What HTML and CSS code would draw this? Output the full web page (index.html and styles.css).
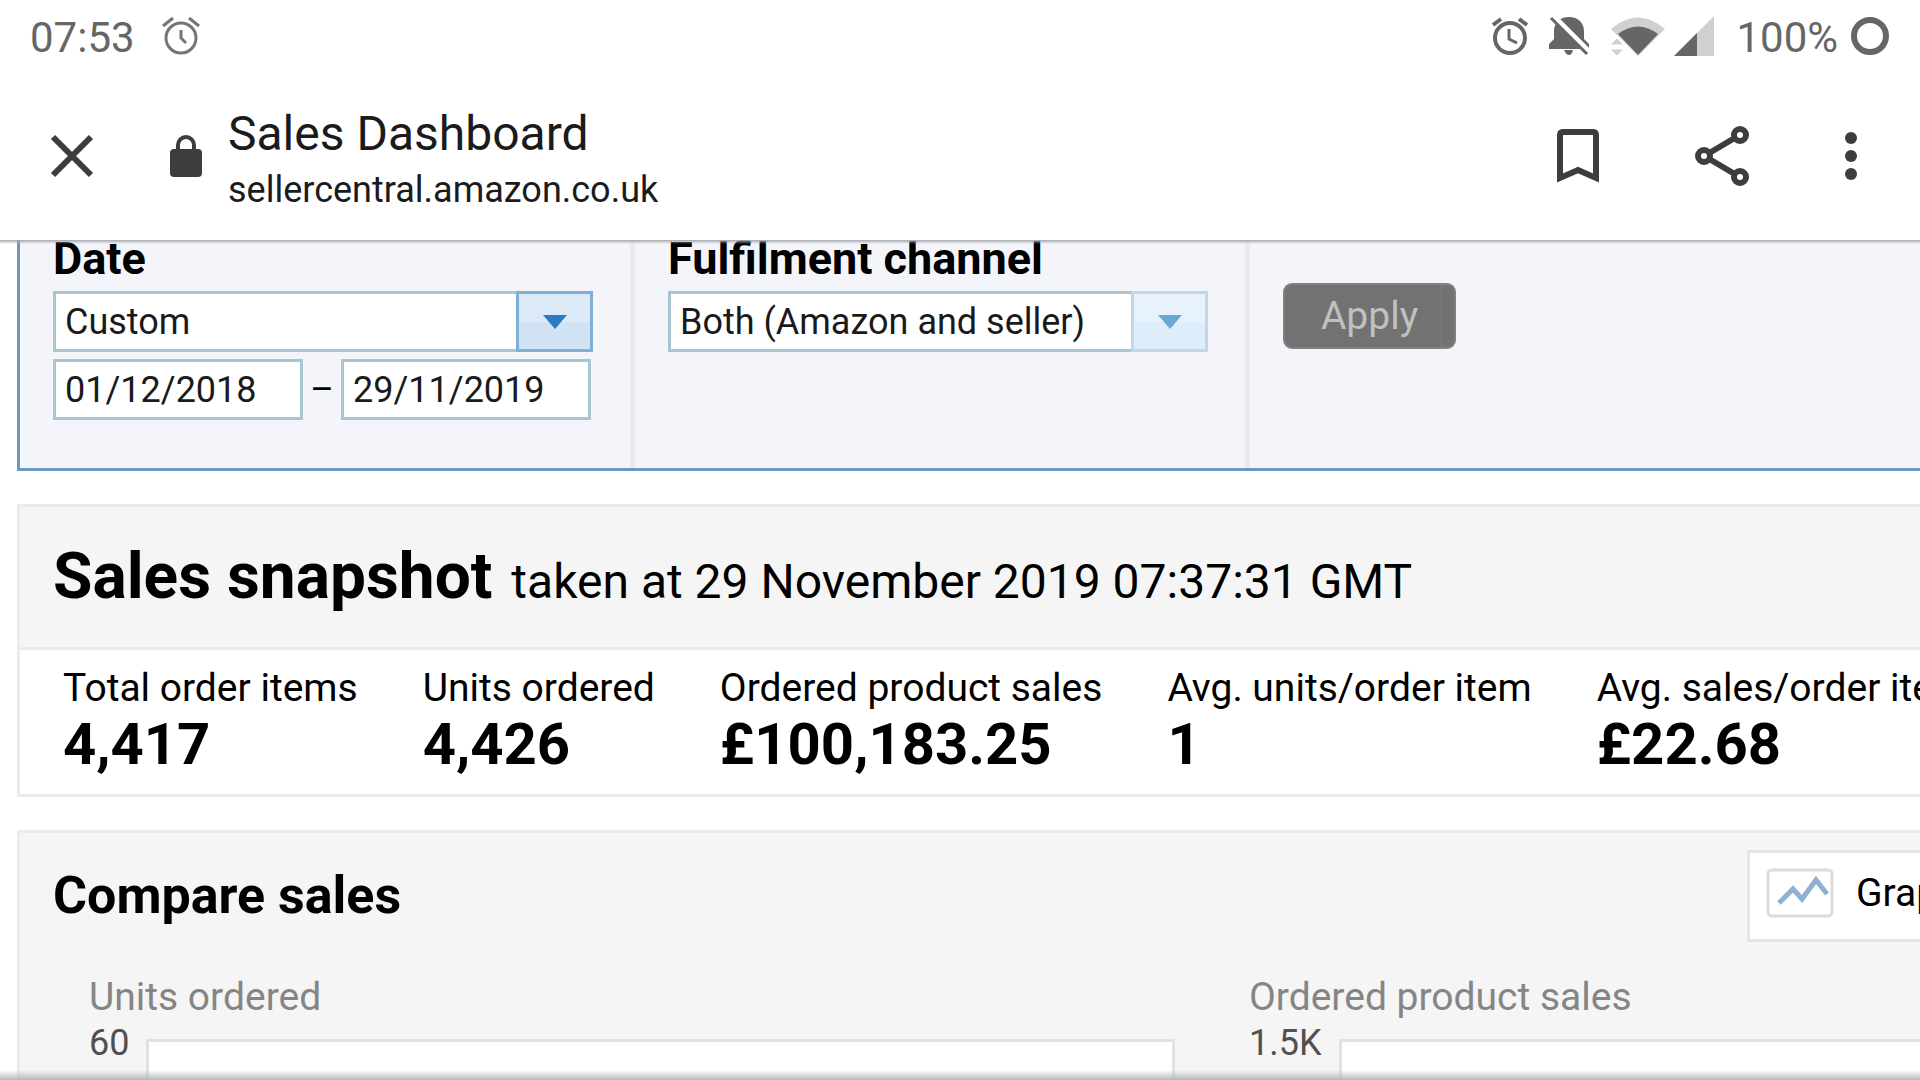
FILE: index.html
```html
<!doctype html>
<html lang="en-GB">
    <head>
        <meta charset="utf-8">
        <meta name="viewport" content="width=device-width, initial-scale=1">
        <title>Sales Dashboard</title>
        <link rel="stylesheet" href="styles.css">
    </head>
    <body>
        <!-- phone status bar -->
        <div class="status">
            <span>07:53</span>
            <svg class="status-alarm" width="38" height="40" viewBox="0 0 38 40" fill="none" stroke="#757575" stroke-width="3">
                <circle cx="19" cy="22" r="15"/>
                <path d="M19 14v8l5 5M1 10l10-8M37 10L27 2"/>
            </svg>
            <div class="status-right">
                <svg width="36" height="40" viewBox="0 0 36 40" fill="none" stroke="#666" stroke-width="4">
                    <circle cx="18" cy="22" r="15"/>
                    <path d="M17 13v10l8 4" stroke-width="3"/>
                    <path d="M1 9l8-6M35 9l-8-6"/>
                </svg>
                <svg class="bell" width="40" height="40" viewBox="0 0 40 40">
                    <path d="M0 33v-5l5-5v-8C5 7 11 1 20 1s15 6 15 14v8l5 5v5zM15 34h9q-1 5-4 5t-5-5z" fill="#666"/>
                    <path d="M4 0l36 36" stroke="#fff" stroke-width="6"/>
                    <path d="M2 2l36 36" stroke="#666" stroke-width="3"/>
                </svg>
                <svg class="wifi" width="54" height="40" viewBox="0 0 54 40">
                    <path d="M0 13Q27-10 54 13L27 40z" fill="#d0d0d0"/>
                    <path d="M7 18Q27 3 47 18L27 39z" fill="#666"/>
                    <path d="M-1 29h14l-7-7zM-1 33h14l-7 7z" fill="#d0d0d0" stroke="#fff" stroke-width="1"/>
                </svg>
                <svg class="signal" width="40" height="40" viewBox="0 0 40 40">
                    <path d="M40 0v40H0z" fill="#d0d0d0"/>
                    <path d="M23 17v23H0z" fill="#666"/>
                </svg>
                <span>100%</span>
                <svg width="40" height="40" viewBox="0 0 40 40"><circle cx="20" cy="20" r="16" fill="none" stroke="#666" stroke-width="6"/></svg>
            </div>
        </div>

        <!-- browser toolbar -->
        <header class="toolbar">
            <button class="icon-btn" aria-label="Close">
                <svg width="40" height="40" viewBox="0 0 40 40" stroke="#3c3d3e" stroke-width="6"><path d="M1 1l38 38M39 1L1 39"/></svg>
            </button>
            <svg class="lock" width="32" height="42" viewBox="0 0 32 42">
                <rect y="14" width="32" height="28" rx="4" fill="#3c3d3e"/>
                <path d="M8 16v-6a8 8 0 0 1 16 0v6" fill="none" stroke="#3c3d3e" stroke-width="4"/>
            </svg>
            <div class="address">
                <div class="address-title">Sales Dashboard</div>
                <div class="address-url">sellercentral.amazon.co.uk</div>
            </div>
            <div class="actions">
                <button class="icon-btn" aria-label="Bookmark">
                    <svg width="42" height="60" viewBox="0 0 42 60"><path d="M3 52V9q0-3 3-3h30q3 0 3 3v43L21 44z" fill="none" stroke="#3c3d3e" stroke-width="6"/></svg>
                </button>
                <button class="icon-btn" aria-label="Share">
                    <svg width="54" height="60" viewBox="0 0 54 60" fill="none" stroke="#3c3d3e">
                        <path d="M16 26l22-13M16 34l22 13" stroke-width="6"/>
                        <g stroke-width="6"><circle cx="9" cy="30" r="6"/><circle cx="45" cy="9" r="6"/><circle cx="45" cy="51" r="6"/></g>
                    </svg>
                </button>
                <button class="icon-btn" aria-label="More">
                    <svg width="12" height="60" viewBox="0 0 12 60" fill="#3c3d3e"><circle cx="6" cy="12" r="6"/><circle cx="6" cy="30" r="6"/><circle cx="6" cy="48" r="6"/></svg>
                </button>
            </div>
        </header>

        <main class="page">
            <form class="filters">
                <div class="filter">
                    <label class="filter-label" for="date">Date</label>
                    <div class="dropdown dropdown-active">
                        <select id="date"><option>Custom</option></select>
                        <span class="arrow"></span>
                    </div>
                    <div class="range">
                        <input type="text" value="01/12/2018" aria-label="From">
                        <span>–</span>
                        <input type="text" value="29/11/2019" aria-label="To">
                    </div>
                </div>
                <div class="filter">
                    <label class="filter-label" for="channel">Fulfilment channel</label>
                    <div class="dropdown">
                        <select id="channel"><option>Both (Amazon and seller)</option></select>
                        <span class="arrow"></span>
                    </div>
                </div>
                <div class="filter">
                    <button type="button" class="apply">Apply</button>
                </div>
            </form>

            <section class="panel">
                <h1 class="snapshot-head">Sales snapshot <small>taken at 29 November 2019 07:37:31 GMT</small></h1>
                <dl class="stats">
                    <div><dt>Total order items</dt><dd>4,417</dd></div>
                    <div><dt>Units ordered</dt><dd>4,426</dd></div>
                    <div><dt>Ordered product sales</dt><dd>£100,183.25</dd></div>
                    <div><dt>Avg. units/order item</dt><dd>1</dd></div>
                    <div><dt>Avg. sales/order item</dt><dd>£22.68</dd></div>
                </dl>
            </section>

            <section class="panel compare">
                <div class="compare-head">
                    <h2>Compare sales</h2>
                    <button class="view">
                        <svg width="68" height="50" viewBox="0 0 68 50" fill="none">
                            <rect x="2" y="2" width="64" height="46" rx="4" stroke="#dcdcdc" stroke-width="3"/>
                            <path d="M13 35l14-14 9 10 14-19 11 14" stroke="#8fb0d0" stroke-width="5"/>
                        </svg>
                        Graph view
                    </button>
                </div>
                <div class="charts">
                    <div class="chart">
                        <h3>Units ordered</h3>
                        <div class="chart-row"><span>60</span><div class="plot"></div></div>
                    </div>
                    <div class="chart">
                        <h3>Ordered product sales</h3>
                        <div class="chart-row"><span>1.5K</span><div class="plot"></div></div>
                    </div>
                </div>
            </section>
        </main>
    </body>
</html>
```
FILE: styles.css
```css
* {
    box-sizing: border-box;
}
body {
    margin: 0;
    height: 100vh;
    display: flex;
    flex-direction: column;
    overflow: hidden;
    background: #fff;
    color: #000;
    font-family: Roboto, sans-serif;
    font-size: 39px;
    white-space: nowrap;
}
button, input, select {
    font: inherit;
}
svg {
    display: block;
    flex: none;
    overflow: visible;
}

/* status bar */
.status {
    display: flex;
    align-items: center;
    height: 72px;
    padding: 0 30px;
    font-size: 42px;
    line-height: 72px;
    color: #666;
}
.status span {
    padding-top: 3px;
}
.status-alarm {
    margin-left: 27px;
}
.status-right {
    display: flex;
    align-items: center;
    margin-left: auto;
}
.bell {
    margin-left: 21px;
}
.wifi {
    margin-left: 22px;
}
.signal {
    margin: 0 22px 0 9px;
}
.status-right span {
    margin-right: 12px;
}

/* toolbar */
.toolbar {
    display: flex;
    align-items: center;
    flex: none;
    height: 168px;
    padding: 0 63px 0 52px;
    color: #1b1b1b;
}
.icon-btn {
    padding: 0;
    border: 0;
    background: none;
}
.lock {
    margin: 0 26px 0 78px;
}
.address {
    padding-top: 8px;
}
.address-title {
    font-size: 48px;
    line-height: 60px;
}
.address-url {
    font-size: 36px;
    line-height: 52px;
}
.actions {
    display: flex;
    gap: 96px;
    margin-left: auto;
}

/* page content, scrolled under the toolbar */
.page {
    position: relative;
    flex: 1;
    overflow: hidden;
    padding-left: 17px;
}
.page::before, .page::after {
    content: "";
    position: absolute;
    left: 0;
    right: 0;
}
.page::before {
    top: 0;
    height: 4px;
    background: linear-gradient(#a8a9ac, rgba(200, 200, 200, 0));
}
.page::after {
    bottom: 0;
    height: 10px;
    background: linear-gradient(rgba(180, 180, 180, 0), #b8b8b8);
}

/* filters */
.filters {
    display: flex;
    height: 231px;
    border: solid #6f97bd;
    border-width: 0 0 3px 3px;
    background: #f4f5fb;
}
.filter {
    width: 615px;
    padding: 0 37px 0 33px;
    border-right: 5px solid #e9eaee;
}
.filter:last-child {
    flex: 1;
    border: 0;
}
.filter-label {
    display: block;
    margin-bottom: 13px;
    font-size: 45px;
    font-weight: bold;
    line-height: 38px;
}
.dropdown {
    position: relative;
    height: 61px;
}
.dropdown select {
    appearance: none;
    width: 100%;
    height: 100%;
    padding: 0 9px;
    border: 3px solid #a9c5d2;
    border-radius: 0;
    background: #fff;
    color: #1a1a1a;
    font-size: 36px;
}
.arrow {
    position: absolute;
    top: 0;
    right: 0;
    width: 77px;
    height: 61px;
    border: 3px solid #c0d7e6;
    background: linear-gradient(#e8f2fd 50%, #deedfa 50%);
    pointer-events: none;
}
.arrow::after {
    content: "";
    position: absolute;
    top: 21px;
    left: 24px;
    border: solid transparent;
    border-width: 14px 12px 0;
    border-top-color: #69a9d4;
}
.dropdown-active .arrow {
    border-color: #7fb0d3;
    background: linear-gradient(#dce9f7 50%, #d0e2f4 50%);
}
.dropdown-active .arrow::after {
    border-top-color: #2a7bc0;
}
.range {
    display: flex;
    align-items: center;
    justify-content: space-between;
    margin: 7px 2px 0 0;
    font-size: 36px;
}
.range input {
    width: 250px;
    height: 61px;
    padding: 0 9px;
    border: 3px solid #a9c5d2;
    background: #fff;
    color: #1a1a1a;
}
.apply {
    width: 173px;
    height: 66px;
    margin-top: 43px;
    padding: 0;
    border: 2px solid #808080;
    border-radius: 9px;
    background: linear-gradient(#7f7f7f, #7f7f7f) 156px 0 / 1px 100% no-repeat #727272;
    color: #c0c0c0;
}

/* panels */
.panel {
    margin-top: 33px;
    border: solid #ebebeb;
    border-width: 3px 0 3px 3px;
}
.snapshot-head {
    margin: 0;
    padding-left: 33px;
    border-bottom: 3px solid #ebebeb;
    background: #f5f5f5;
    font-size: 64px;
    line-height: 140px;
}
.snapshot-head small {
    margin-left: 3px;
    font-size: 48px;
    font-weight: normal;
    line-height: 1;
}
.stats {
    display: flex;
    gap: 65px;
    margin: 0;
    padding: 12px 0 20px 43px;
}
.stats dt {
    line-height: 52px;
}
.stats dd {
    margin: 0;
    font-size: 58px;
    font-weight: bold;
    line-height: 60px;
}
.compare {
    background: #f5f5f5;
}
.compare-head {
    display: flex;
    justify-content: space-between;
    padding: 17px 0 0 33px;
}
.compare-head h2 {
    margin: 0;
    font-size: 52px;
    line-height: 92px;
}
.view {
    display: flex;
    align-items: center;
    gap: 22px;
    width: 173px;
    height: 92px;
    padding: 0 0 6px 16px;
    border: solid #e6e6e6;
    border-width: 3px 0 3px 3px;
    background: #fff;
    color: #000;
    overflow: hidden;
}
.charts {
    display: flex;
    gap: 74px;
    padding: 32px 0 0 69px;
}
.chart {
    flex: none;
    width: 1086px;
}
.chart h3 {
    margin: 0;
    font-size: 39px;
    font-weight: normal;
    line-height: 46px;
    color: #858585;
}
.chart-row {
    display: flex;
    gap: 17px;
    height: 200px;
    font-size: 36px;
    line-height: 46px;
    color: #505050;
}
.plot {
    flex: 1;
    margin-top: 19px;
    border: 3px solid #dfe3e5;
    background: #fff;
}
```
